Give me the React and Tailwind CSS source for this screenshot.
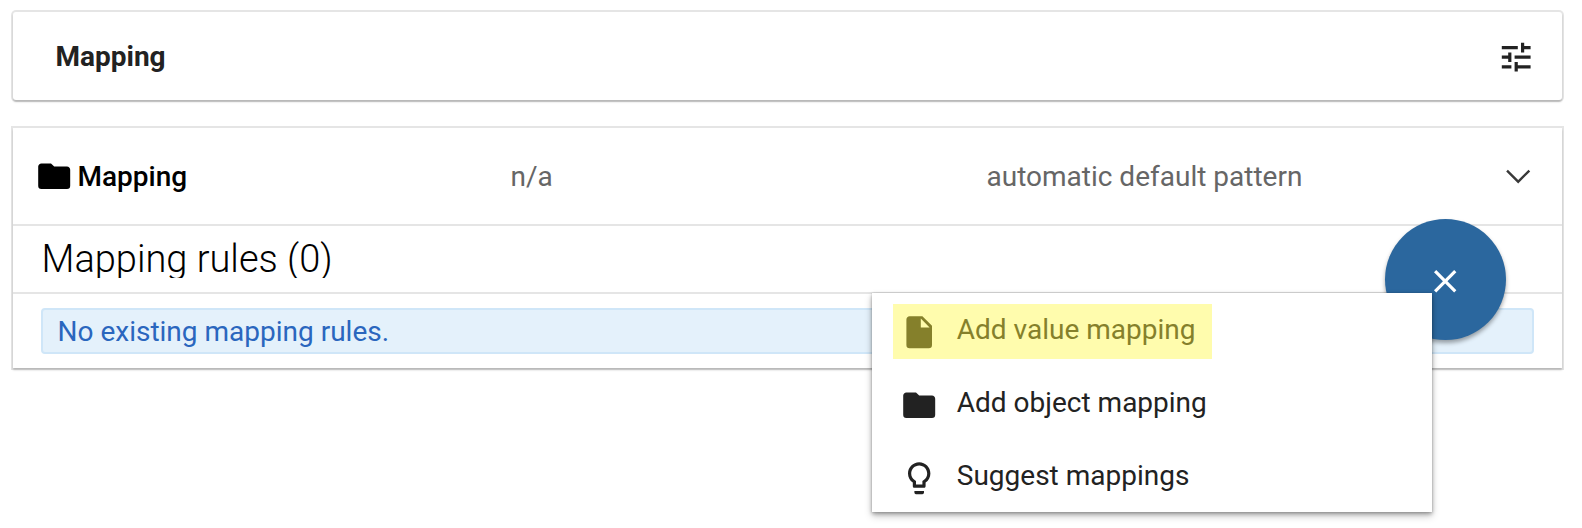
import React from "react";

function FolderIcon({ className }) {
  return (
    <svg viewBox="0 0 24 24" className={className} fill="currentColor">
      <path d="M10 4H4c-1.110 0-2 .89-2 2v12a2 2 0 0 0 2 2h16a2 2 0 0 0 2-2V8c0-1.110-.9-2-2-2h-8l-2-2z" />
    </svg>
  );
}

function FileIcon({ className }) {
  return (
    <svg viewBox="0 0 24 24" className={className} fill="currentColor">
      <path d="M13 9V3.5L18.500 9M6 2c-1.110 0-2 .89-2 2v16a2 2 0 0 0 2 2h12a2 2 0 0 0 2-2V8l-6-6H6z" />
    </svg>
  );
}

function BulbIcon({ className }) {
  return (
    <svg viewBox="0 0 24 24" className={className} fill="currentColor">
      <path d="M9 21c0 .55.45 1 1 1h4c.55 0 1-.45 1-1v-1H9v1zm3-19C8.140 2 5 5.140 5 9c0 2.380 1.190 4.470 3 5.740V17c0 .55.45 1 1 1h6c.55 0 1-.45 1-1v-2.260c1.810-1.270 3-3.360 3-5.740 0-3.860-3.140-7-7-7zm2.850 11.100l-.85.6V16h-4v-2.300l-.85-.6C7.800 12.160 7 10.630 7 9c0-2.760 2.240-5 5-5s5 2.240 5 5c0 1.630-.8 3.160-2.150 4.100z" />
    </svg>
  );
}

function TuneIcon({ className }) {
  return (
    <svg viewBox="0 0 24 24" className={className} fill="currentColor">
      <path d="M3 17v2h6v-2H3zM3 5v2h10V5H3zm10 16v-2h8v-2h-8v-2h-2v6h2zM7 9v2H3v2h4v2h2V9H7zm14 4v-2H11v2h10zm-6-4h2V7h4V5h-4V3h-2v6z" />
    </svg>
  );
}

function CloseIcon({ className }) {
  return (
    <svg viewBox="0 0 24 24" className={className} fill="currentColor">
      <path d="M19 6.410L17.590 5 12 10.590 6.410 5 5 6.410 10.590 12 5 17.590 6.410 19 12 13.410 17.590 19 19 17.590 13.410 12z" />
    </svg>
  );
}

function MenuItem({ icon, children, active }) {
  return (
    <li className={active ? "flex h-[73px] items-center text-[#85802b]" : "flex h-[73px] items-center text-[#222]"}>
      <span className={active ? "-ml-[7px] flex h-[55px] w-[319px] items-center bg-[#fffcad] pl-[7px]" : "flex items-center"}>
        {icon}
        <span className="ml-[18.4px] whitespace-nowrap pb-1">{children}</span>
      </span>
    </li>
  );
}

export default function App() {
  return (
    <div className="relative h-[528px] w-[1582px] overflow-hidden bg-white pl-[13px] pr-5 pt-3 font-['Roboto',sans-serif] text-[28px] leading-10 text-[#222]">
      <header className="flex h-[88px] items-center justify-between rounded-[3px] bg-white pl-[42.5px] pr-[27px] shadow-[0_0_0_2px_rgba(0,0,0,0.1),0_2px_2px_rgba(0,0,0,0.2)]">
        <h1 className="pt-0.5 font-bold">Mapping</h1>
        <TuneIcon className="mt-[2px] size-[38.4px]" />
      </header>

      <section className="mt-7 h-[240px] bg-white shadow-[0_0_0_2px_rgba(0,0,0,0.1),0_2px_2px_rgba(0,0,0,0.2)]">
        <div className="flex h-24 items-center pl-[22px] pr-[25px]">
          <FolderIcon className="mt-px size-[38.4px] text-black" />
          <span className="ml-[4.1px] w-[433px] pt-0.5 font-medium text-black">Mapping</span>
          <span className="w-[476px] pt-0.5 text-[#666]">n/a</span>
          <span className="pt-0.5 text-[#666]">automatic default pattern</span>
          <svg viewBox="0 0 32 32" className="ml-auto size-[38.4px]" fill="#393939">
            <path d="M16 22L6 12l1.400-1.400 8.600 8.600 8.600-8.600L26 12z" />
          </svg>
        </div>
        <div className="flex h-[68px] items-start border-t-2 border-[#e5e5e5] pl-[28.5px] pt-3">
          <h2 className="h-10 overflow-hidden text-[38px] font-light leading-[42px] text-black">Mapping rules (0)</h2>
        </div>
        <div className="border-t-2 border-[#e5e5e5] px-7 pt-3.5">
          <div className="flex h-[46px] items-center rounded-[4px] border-2 border-[#cfe6f8] bg-[#e4f1fb] pl-[14.5px] pt-0.5 text-[#2a66be]">
            No existing mapping rules.
          </div>
        </div>
      </section>

      <button className="absolute left-[1385px] top-[219px] flex size-[121px] items-center justify-center rounded-full bg-[#2b679e] pr-px pt-[3px] text-white shadow-[0_3px_4px_rgba(0,0,0,0.35)]">
        <CloseIcon className="size-[38.4px]" />
      </button>

      <ul className="absolute left-[872px] top-[293px] h-[219px] w-[560px] bg-white pl-7 pt-0.5 shadow-[0_0_2px_rgba(0,0,0,0.15),0_4px_8px_rgba(0,0,0,0.2),0_2px_4px_rgba(0,0,0,0.3)]">
        <MenuItem active icon={<FileIcon className="mt-px size-[38.4px]" />}>Add value mapping</MenuItem>
        <MenuItem icon={<FolderIcon className="mt-px size-[38.4px]" />}>Add object mapping</MenuItem>
        <MenuItem icon={<BulbIcon className="mt-px size-[38.4px]" />}>Suggest mappings</MenuItem>
      </ul>
    </div>
  );
}
